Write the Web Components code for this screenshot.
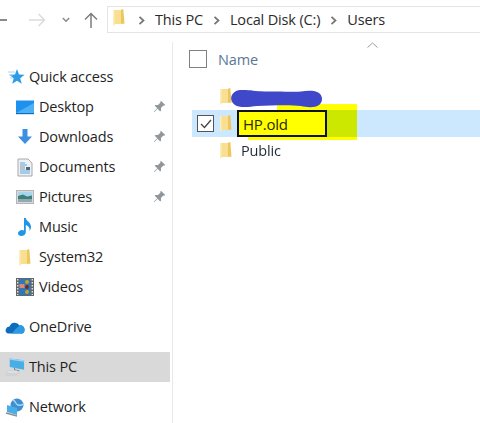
<!DOCTYPE html>
<html>
<head>
<meta charset="utf-8">
<title>Users</title>
<style>
html, body { margin: 0; height: 100%; background: #fff; overflow: hidden; }
body { font-family: "Open Sans", "Noto Sans", sans-serif; color: #1a1a1a; letter-spacing: -.16px; }
</style>
</head>
<body>

<explorer-window>
  <address-bar slot="top"></address-bar>
  <nav-pane slot="left">
    <nav-item label="Quick access" level="0" icon="star"></nav-item>
    <nav-item label="Desktop" level="1" icon="desktop" pinned></nav-item>
    <nav-item label="Downloads" level="1" icon="downloads" pinned></nav-item>
    <nav-item label="Documents" level="1" icon="documents" pinned></nav-item>
    <nav-item label="Pictures" level="1" icon="pictures" pinned></nav-item>
    <nav-item label="Music" level="1" icon="music"></nav-item>
    <nav-item label="System32" level="1" icon="folder"></nav-item>
    <nav-item label="Videos" level="1" icon="videos"></nav-item>
    <nav-item label="OneDrive" level="0" icon="onedrive" class="group"></nav-item>
    <nav-item label="This PC" level="0" icon="pc" class="group" active></nav-item>
    <nav-item label="Network" level="0" icon="network" class="group"></nav-item>
  </nav-pane>
  <file-list slot="main">
    <file-row scribble></file-row>
    <file-row label="HP.old" selected></file-row>
    <file-row label="Public"></file-row>
  </file-list>
</explorer-window>

<script>
const FOLDER = `<svg viewBox="0 0 12 17" width="12" height="17"><path d="M0 1h9V15H2.200L0 16.800z" fill="#f9df91"/><path d="M8 .8L10.300 0l1.200 14.800H8z" fill="#efc65c"/><path d="M0 1h1.500V15.300L0 16.800z" fill="#fdeebf"/></svg>`;

const ICONS = {
  star: `<svg viewBox="0 0 20 18" width="20" height="18"><path d="M12 1l2 5.400 5.600.3-4.400 3.500 1.500 5.600L12 12.700l-4.800 3 1.500-5.500-4.400-3.500 5.700-.3z" fill="#2e9be6"/><path d="M3 4h7M4 7h4M5 10h3" stroke="#a9d6f5" stroke-width="1"/></svg>`,
  desktop: `<svg viewBox="0 0 18 15" width="18" height="15"><rect y=".5" width="18" height="12.500" fill="#1e90ee"/><path d="M0 13L18 3v10z" fill="#4fb0f5"/><rect y="13" width="18" height="1.200" fill="#0f6fb8"/></svg>`,
  downloads: `<svg viewBox="0 0 18 18" width="18" height="18"><path d="M6.500 1h5v7.500H16L9 16 2 8.500h4.500z" fill="#3d8fe0"/></svg>`,
  documents: `<svg viewBox="0 0 16 19" width="16" height="19"><path d="M1 1h10l4 4v13H1z" fill="#eef0f2" stroke="#a8a8a8"/><path d="M3 5h5M3 7h7M3 13h10M3 15h10" stroke="#5aa7de"/><rect x="9" y="9" width="4" height="3" fill="#4a6b85"/><path d="M3 9h5M3 11h5" stroke="#7a9ab0"/></svg>`,
  pictures: `<svg viewBox="0 0 18 14" width="18" height="14"><rect x=".5" y=".5" width="17" height="13" fill="#d8dbdd" stroke="#b5b5b5"/><rect x="2" y="2" width="14" height="4" fill="#a8d4ec"/><path d="M2 6l5-1.500 4 2 5-1v5.500H2z" fill="#3f7f76"/><rect x="2" y="9" width="14" height="3" fill="#8fa9b5"/></svg>`,
  music: `<svg viewBox="0 0 16 20" width="16" height="20"><path d="M7 1h1.800c.3 3 5.200 4.200 5.200 9 0 1.500-.6 2.800-1.300 3.700.2-3.300-1.800-5-3.900-5.700V15c0 2.500-2.200 4-4.500 4C2.500 19 1 18 1 16.300 1 14.300 3.300 13 5 13c.8 0 1.500.2 2 .5z" fill="#1f95e8"/></svg>`,
  folder: FOLDER,
  videos: `<svg viewBox="0 0 18 18" width="18" height="18"><rect width="18" height="18" fill="#62676c"/><rect x="3.500" y="1" width="11" height="16" fill="#2f77b8"/><rect x="3.500" y="6" width="5" height="4" fill="#d88a7a"/><circle cx="11" cy="4" r="2" fill="#c9a227"/><circle cx="11" cy="9" r="2" fill="#7a2a1a"/><circle cx="11" cy="14" r="2" fill="#c9a227"/><path d="M1.700 1v16M16.300 1v16" stroke="#e3e3e3" stroke-width="1.400" stroke-dasharray="1.500 1.500"/></svg>`,
  onedrive: `<svg viewBox="0 0 20 13" width="20" height="13"><path d="M3.500 12.500A3 3 0 0 1 1 8a3.400 3.400 0 0 1 3.600-2.600A5.400 5.400 0 0 1 14.500 4.500a4 4 0 0 1 5 4 4 4 0 0 1-2 4z" fill="#0f6cbd"/><path d="M7 12.500l3-4 4.500-4a4 4 0 0 1 5 4 4 4 0 0 1-2 4z" fill="#2b9be6"/></svg>`,
  pc: `<svg viewBox="0 0 21 20" width="21" height="20"><path d="M5 1l15 2v10L5 10z" fill="#4aaee6"/><path d="M5 1l15 2v1.500L5 2.500z" fill="#9ad4f2"/><path d="M10 11v2l5 1" fill="none" stroke="#5d7f95"/><path d="M4 14h9l2 2.500H1z" fill="#e3e5e7" stroke="#c4c8cc" stroke-width=".7"/><path d="M1 18.500h12" stroke="#c8ccd0"/></svg>`,
  network: `<svg viewBox="0 0 20 19" width="20" height="19"><circle cx="12" cy="7" r="6.500" fill="#3f8fd2"/><path d="M8 2c3 1 2 4 5 5s5-1 5-1" fill="none" stroke="#a9d8f2" stroke-width="1.500"/><path d="M2 7l10 3v7L2 14z" fill="#4aaee6"/><path d="M1 15l11 3" stroke="#8b8f93" stroke-width="1.500"/></svg>`
};

const PIN = `<svg viewBox="0 0 14 14" width="13" height="13"><path d="M8.500 .8l4.700 4.700-1.300.8-.7-.3-2.700 2.700.2 2.600-1 1L5 9.400 1.500 13 1 12.500 4.600 9 1.800 6.300l1-1 2.600.2L8.100 2.800l-.3-.7z" fill="#8f979c"/></svg>`;

class ExplorerWindow extends HTMLElement {
  constructor() {
    super();
    this.attachShadow({ mode: 'open' }).innerHTML = `
      <style>
        :host { display: flex; flex-direction: column; width: 480px; height: 423px; overflow: hidden; }
        .body { flex: 1; display: flex; min-height: 0; margin-top: 9px; }
      </style>
      <slot name="top"></slot>
      <div class="body">
        <slot name="left"></slot>
        <slot name="main"></slot>
      </div>`;
  }
}

class AddressBar extends HTMLElement {
  constructor() {
    super();
    const sep = `<svg class="sep" viewBox="0 0 7 9" width="7" height="9"><path d="M1.500 .8L5.500 4.500 1.500 8.200" fill="none" stroke="#777" stroke-width="1.800"/></svg>`;
    this.attachShadow({ mode: 'open' }).innerHTML = `
      <style>
        :host { display: flex; align-items: center; height: 27px; margin-top: 6px; font-size: 14.500px; color: #2b2b2b; }
        .back { width: 7px; height: 2px; background: #8a8a8a; }
        .fwd { margin-left: 22px; display: flex; }
        .down { margin-left: 16px; display: flex; }
        .up { margin-left: 14px; display: flex; }
        .path { flex: 1; height: 27px; margin-left: 9px; display: flex; align-items: center; box-sizing: border-box;
                border: 1px solid #e4e4e4; border-right: 0; padding-left: 5px; }
        .sep { margin: 1px 10px 0 10px; }
        .sep:first-of-type { margin-left: 13px; }
        svg { flex: none; }
      </style>
      <div class="back"></div>
      <div class="fwd"><svg width="17" height="14" viewBox="0 0 17 14"><path d="M0 7h15M9.500 1l6 6-6 6" fill="none" stroke="#dcdcdc" stroke-width="1.600"/></svg></div>
      <div class="down"><svg width="8" height="6" viewBox="0 0 8 6"><path d="M.8 1L4 4.200 7.200 1" fill="none" stroke="#8a8a8a" stroke-width="1.500"/></svg></div>
      <div class="up"><svg width="14" height="16" viewBox="0 0 14 16"><path d="M7 16V1.500M1 7.500l6-6 6 6" fill="none" stroke="#7d7d7d" stroke-width="1.500"/></svg></div>
      <div class="path">
        <span class="home">${FOLDER}</span>
        ${sep}<span>This PC</span>
        ${sep}<span>Local Disk (C:)</span>
        ${sep}<span>Users</span>
      </div>`;
  }
}

class NavPane extends HTMLElement {
  constructor() {
    super();
    this.attachShadow({ mode: 'open' }).innerHTML = `
      <style>
        :host { display: block; width: 172px; flex: none; box-sizing: border-box; padding-top: 20px; }
        .inner { width: 170px; }
        ::slotted(.group) { margin-top: 10px; }
      </style>
      <div class="inner"><slot></slot></div>`;
  }
}

class NavItem extends HTMLElement {
  connectedCallback() {
    if (this.shadowRoot) return;
    const level = this.getAttribute('level') === '1';
    const pinned = this.hasAttribute('pinned');
    const active = this.hasAttribute('active');
    this.attachShadow({ mode: 'open' }).innerHTML = `
      <style>
        :host { display: flex; align-items: center; height: 30px; font-size: 14.500px; color: #1f1f1f;
                background: ${active ? '#d9d9d9' : 'transparent'}; padding-left: ${level ? 15 : 5}px; }
        .icon { width: 24px; display: flex; flex: none; }
        .glyph { width: ${level ? 19 : 20}px; display: flex; justify-content: center; }
        .label { flex: 1; white-space: nowrap; position: relative; top: -1px; }
        .pin { display: flex; margin-right: 4px; position: relative; top: -1px; }
      </style>
      <span class="icon"><span class="glyph">${ICONS[this.getAttribute('icon')]}</span></span>
      <span class="label">${this.getAttribute('label')}</span>
      ${pinned ? `<span class="pin">${PIN}</span>` : ''}`;
  }
}

class FileList extends HTMLElement {
  constructor() {
    super();
    this.attachShadow({ mode: 'open' }).innerHTML = `
      <style>
        :host { display: block; flex: 1; position: relative; border-left: 1px solid #e9e9e9; padding-left: 19px; }
        .head { display: flex; align-items: center; height: 32px; margin-top: 1px; margin-bottom: 8px; color: #5a7796; font-size: 14.500px; }
        .box { width: 16px; height: 16px; border: 1px solid #808080; margin-left: -3px; margin-right: 11px; }
        .sort { position: absolute; left: 194px; top: 0; }
      </style>
      <svg class="sort" width="11" height="6" viewBox="0 0 11 6"><path d="M.5 5.500l5-4.500 5 4.500" fill="none" stroke="#9a9a9a"/></svg>
      <div class="head"><span class="box"></span><span>Name</span></div>
      <slot></slot>`;
  }
}

class FileRow extends HTMLElement {
  connectedCallback() {
    if (this.shadowRoot) return;
    const selected = this.hasAttribute('selected');
    const scribble = this.hasAttribute('scribble');
    const label = this.getAttribute('label') || '';
    this.attachShadow({ mode: 'open' }).innerHTML = `
      <style>
        :host { display: flex; align-items: center; height: 27px; position: relative; z-index: ${scribble ? 2 : 0};
                font-size: 14.500px; color: #1f2a36; background: ${selected ? '#cce8ff' : 'transparent'}; }
        .check { position: absolute; left: 5px; top: 5px; width: 15px; height: 15px; border: 1px solid #555; background: #fff;
                 display: flex; align-items: center; justify-content: center; }
        .folder { margin-left: 28px; display: flex; position: relative; }
        .name { margin-left: 9px; }
        .blot { position: absolute; left: 39px; top: 7px; }
        .marker { position: absolute; left: 0; top: -6px; mix-blend-mode: multiply; }
        .edit { position: absolute; left: 45px; top: 0; width: 82px; height: 23px; border: 2px solid #111; background: #ffff00;
                display: flex; align-items: center; padding-left: 4px; color: #2a2a00; font-size: 15px; letter-spacing: -.2px; }
      </style>
      ${selected ? `
        <svg class="marker" width="170" height="36" viewBox="0 0 170 36"><path d="M85 0H165V36H56V30H85z" fill="#ffff00"/></svg>
        <span class="check"><svg width="12" height="10" viewBox="0 0 12 10"><path d="M1 5l3.500 3.500L11 1" fill="none" stroke="#444" stroke-width="1.300"/></svg></span>` : ''}
      <span class="folder">${FOLDER}</span>
      ${selected ? `<span class="edit">${label}</span>` : ''}
      ${!selected && !scribble ? `<span class="name">${label}</span>` : ''}
      ${scribble ? `<svg class="blot" width="92" height="18" viewBox="0 0 92 18"><path d="M9 0C20 -.5 26 2 40 1.500 52 1 62 2.500 70 1.500 76 .5 84 0 88 3 92 6 92 12 88 15 84 18 76 17.500 70 16 58 14.500 40 15.500 26 16 18 17 8 18 4 15 -1 11 -1 6 3 2.500 4.500 1 7 0 9 0z" fill="#3e48c8"/></svg>` : ''}`;
  }
}

customElements.define('explorer-window', ExplorerWindow);
customElements.define('address-bar', AddressBar);
customElements.define('nav-pane', NavPane);
customElements.define('nav-item', NavItem);
customElements.define('file-list', FileList);
customElements.define('file-row', FileRow);
</script>
</body>
</html>
